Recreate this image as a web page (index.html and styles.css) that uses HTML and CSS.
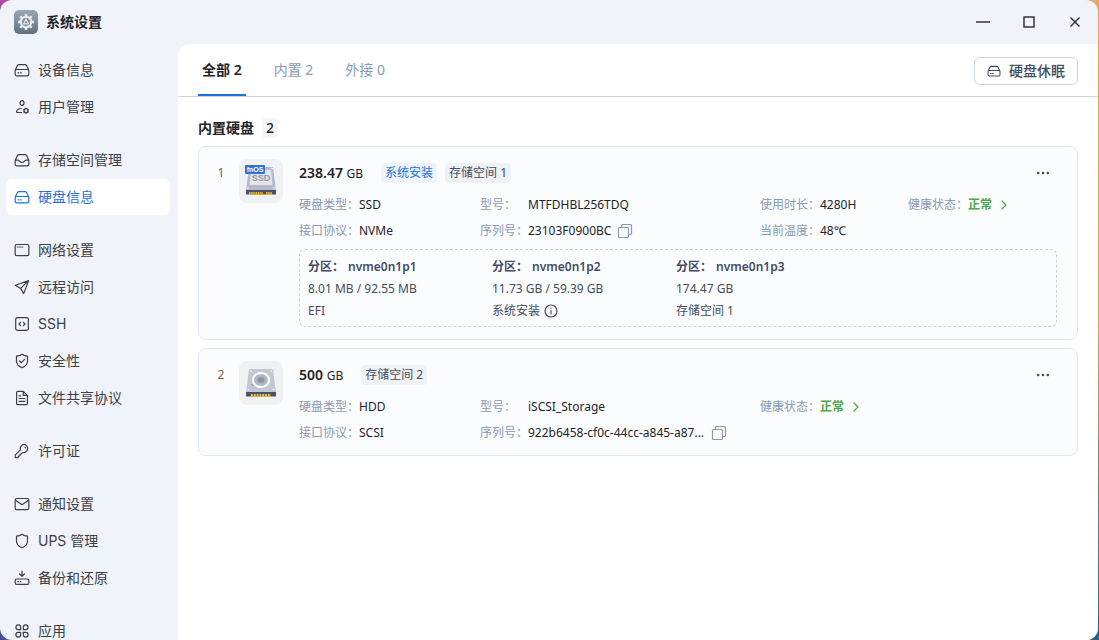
FILE: index.html
```html
<!DOCTYPE html>
<html lang="zh-CN">
<head>
<meta charset="utf-8">
<meta name="viewport" content="width=device-width, initial-scale=1">
<title>系统设置</title>
<link rel="stylesheet" href="styles.css">
</head>
<body>
<svg class="sprite" aria-hidden="true">
  <symbol id="disk" viewBox="0 0 16 16"><path d="M1.2 8.2v4a1.6 1.6 0 0 0 1.6 1.6h10.4a1.6 1.6 0 0 0 1.6-1.6v-4L12.6 3.6a1.7 1.7 0 0 0-1.5-.9H4.9a1.7 1.7 0 0 0-1.5.9L1.2 8.2a1.6 1.6 0 0 1 1.4-.7h10.8a1.6 1.6 0 0 1 1.4.7M4 10.8h.8M6.5 10.8h.8"/></symbol>
  <symbol id="user" viewBox="0 0 16 16"><ellipse cx="8" cy="4" rx="2" ry="2.300"/><path d="M7.200 9.500C4.800 9.600 3 10.900 2.600 12.500c-.1.700.3 1 1 1H7.500"/><circle cx="12" cy="11.700" r="2"/><path d="M12 9.200v.5M12 13.700v.5M9.900 10.400l.4.300M13.700 12.700l.4.300M9.900 13l.4-.3M13.700 10.700l.4-.3"/></symbol>
  <symbol id="storage" viewBox="0 0 16 16"><path d="M1.200 8.200v4a1.600 1.600 0 0 0 1.600 1.600h10.400a1.600 1.600 0 0 0 1.600-1.600v-4L12.600 3.600a1.700 1.700 0 0 0-1.500-.9H4.900a1.700 1.700 0 0 0-1.500.9L1.200 8.200h2.600c1.700 0 1.700 2.300 4.200 2.300s2.500-2.300 4.200-2.300h2.600"/></symbol>
  <symbol id="network" viewBox="0 0 16 16"><rect x="1.200" y="2.500" width="13.600" height="11.200" rx="1.500"/><path d="M3.300 5h.9M5.600 5h.9M7.900 5h.9"/></symbol>
  <symbol id="remote" viewBox="0 0 16 16"><path d="M14.600 1.600 1.400 6.300l5.200 3.100 3.100 5.200zM14.600 1.600l-8 7.800"/></symbol>
  <symbol id="ssh" viewBox="0 0 16 16"><rect x="1.700" y="1.700" width="12.600" height="12.600" rx="1.500"/><path d="M6.600 6.300 5 8l1.600 1.700M9.400 6.300 11 8 9.400 9.700"/></symbol>
  <symbol id="secure" viewBox="0 0 16 16"><path d="M8 1.300C6.500 2.500 4.700 3.100 2.500 3.200v5c0 3 2.300 5.200 5.500 6.500 3.200-1.300 5.500-3.500 5.500-6.500v-5C11.300 3.100 9.500 2.500 8 1.300zM5.600 8l1.800 1.700 3.200-3.300"/></symbol>
  <symbol id="shield" viewBox="0 0 16 16"><path d="M8 1.300C6.500 2.500 4.700 3.100 2.500 3.200v5c0 3 2.300 5.200 5.500 6.500 3.200-1.300 5.500-3.500 5.500-6.500v-5C11.300 3.100 9.500 2.500 8 1.300z"/></symbol>
  <symbol id="file" viewBox="0 0 16 16"><path d="M9.300 1.300H3.900a1.300 1.300 0 0 0-1.300 1.300v10.800a1.300 1.300 0 0 0 1.300 1.300h8.200a1.300 1.300 0 0 0 1.300-1.300V5.400zM9.300 1.300v4.100h4.100M5.200 5.900h1.400M5.200 8.500h5.600M5.200 11.300h5.600"/></symbol>
  <symbol id="key" viewBox="0 0 16 16"><path d="M10.400 1.400a4.200 4.200 0 0 0-4 5.500l-5 5a.9.900 0 0 0-.2.6v1.400c0 .5.300.8.800.8h1.500c.5 0 .8-.3.800-.8v-.8h1c.5 0 .7-.3.700-.8v-1h.8l1.600-1.700a4.200 4.200 0 1 0 2-8.200z"/><path d="M11.100 4.700h.3"/></symbol>
  <symbol id="mail" viewBox="0 0 16 16"><rect x="1.200" y="2.500" width="13.600" height="11.200" rx="1.500"/><path d="m1.600 4.200 5.200 3.700c.7.500 1.700.5 2.400 0l5.200-3.700"/></symbol>
  <symbol id="backup" viewBox="0 0 16 16"><path d="M8 1v5M5.600 4 8 6.300 10.400 4"/><rect x="1.200" y="9" width="13.600" height="5.400" rx="1.500"/><path d="M3.800 11.700h.6M6.200 11.700h.6"/></symbol>
  <symbol id="apps" viewBox="0 0 16 16"><path d="M6.700 6.700H4.200a2.400 2.400 0 1 1 2.500-2.500zM9.300 6.700h2.500a2.400 2.400 0 1 0-2.500-2.500zM6.700 9.300H4.200a2.400 2.400 0 1 0 2.500 2.500zM9.300 9.300h2.500a2.400 2.400 0 1 1-2.500 2.500z"/></symbol>
  <symbol id="copy" viewBox="0 0 16 16"><rect x="1.500" y="4.500" width="10" height="10" rx="1"/><path d="M4.500 4.300V2.500a1 1 0 0 1 1-1h8a1 1 0 0 1 1 1v8a1 1 0 0 1-1 1h-1.800"/></symbol>
  <symbol id="chevron" viewBox="0 0 12 12"><path d="m4 2 4 4-4 4"/></symbol>
  <symbol id="info" viewBox="0 0 16 16"><circle cx="8" cy="8" r="6"/><path d="M8 7.500v3.200M8 5.200v.1"/></symbol>
  <symbol id="dots" viewBox="0 0 16 16"><circle cx="3.200" cy="8" r="1.300"/><circle cx="8" cy="8" r="1.300"/><circle cx="12.800" cy="8" r="1.300"/></symbol>
</svg>
<div class="window">
  <header class="titlebar">
    <svg class="app-icon" viewBox="0 0 24 24" aria-hidden="true">
      <defs><linearGradient id="ig" x1="0" y1="0" x2="0" y2="1"><stop offset="0" stop-color="#9aa7b6"/><stop offset="1" stop-color="#626f80"/></linearGradient></defs>
      <rect width="24" height="24" rx="5" fill="url(#ig)"/>
      <g stroke="#e6e9ed" stroke-width="2.600"><path d="M12 4v16M4 12h16M6.300 6.300l11.400 11.400M17.700 6.300 6.300 17.700"/></g>
      <circle cx="12" cy="12" r="5.200" fill="#7f8c9c" stroke="#e6e9ed" stroke-width="2.200"/>
      <path d="m12 9.200 2.500 4.600h-5z" fill="none" stroke="#e6e9ed" stroke-width="1.200" stroke-linejoin="round"/>
    </svg>
    <h1 class="app-title">系统设置</h1>
    <div class="controls">
      <button class="control" type="button" aria-label="最小化"><svg viewBox="0 0 16 16"><path d="M1 8h14"/></svg></button>
      <button class="control" type="button" aria-label="最大化"><svg viewBox="0 0 16 16"><rect x="3" y="3" width="10" height="10"/></svg></button>
      <button class="control" type="button" aria-label="关闭"><svg viewBox="0 0 16 16"><path d="m3.500 3.500 9 9M12.500 3.500l-9 9"/></svg></button>
    </div>
  </header>
  <div class="body">
    <nav class="sidebar">
      <div class="group">
        <a class="item" href="#device"><svg class="icon"><use href="#disk"/></svg>设备信息</a>
        <a class="item" href="#users"><svg class="icon"><use href="#user"/></svg>用户管理</a>
      </div>
      <div class="group">
        <a class="item" href="#space"><svg class="icon"><use href="#storage"/></svg>存储空间管理</a>
        <a class="item active" href="#disks" aria-current="page"><svg class="icon"><use href="#disk"/></svg>硬盘信息</a>
      </div>
      <div class="group">
        <a class="item" href="#net"><svg class="icon"><use href="#network"/></svg>网络设置</a>
        <a class="item" href="#access"><svg class="icon"><use href="#remote"/></svg>远程访问</a>
        <a class="item" href="#terminal"><svg class="icon"><use href="#ssh"/></svg>SSH</a>
        <a class="item" href="#security"><svg class="icon"><use href="#secure"/></svg>安全性</a>
        <a class="item" href="#share"><svg class="icon"><use href="#file"/></svg>文件共享协议</a>
      </div>
      <div class="group">
        <a class="item" href="#license"><svg class="icon"><use href="#key"/></svg>许可证</a>
      </div>
      <div class="group">
        <a class="item" href="#notify"><svg class="icon"><use href="#mail"/></svg>通知设置</a>
        <a class="item" href="#ups"><svg class="icon"><use href="#shield"/></svg>UPS 管理</a>
        <a class="item" href="#restore"><svg class="icon"><use href="#backup"/></svg>备份和还原</a>
      </div>
      <div class="group">
        <a class="item" href="#application"><svg class="icon"><use href="#apps"/></svg>应用</a>
      </div>
    </nav>
    <main class="main">
      <div class="toolbar">
        <div class="tabs" role="tablist">
          <button class="tab selected" type="button" role="tab" aria-selected="true">全部 2</button>
          <button class="tab" type="button" role="tab" aria-selected="false">内置 2</button>
          <button class="tab" type="button" role="tab" aria-selected="false">外接 0</button>
        </div>
        <button class="sleep" type="button"><svg class="icon-small"><use href="#disk"/></svg>硬盘休眠</button>
      </div>
      <section class="content">
        <h2 class="section-title">内置硬盘 <span class="count">2</span></h2>

        <article class="card">
          <span class="index">1</span>
          <div class="thumb">
            <svg viewBox="0 0 44 44" role="img" aria-label="fnOS SSD">
              <path d="M10 8h24l3 24H7z" fill="#b6bac8"/><path d="M12 11h20l1.500 15h-23z" fill="#e3e5ec"/>
              <path d="M7 31h30v4.500H7z" fill="#4b5068"/><path d="M10 34.500h14M27 34.500h6" stroke="#e5b93c" stroke-width="3" stroke-dasharray="1.500 .7"/>
              <circle cx="33" cy="9.500" r=".8" fill="#fff"/><circle cx="35" cy="29" r=".8" fill="#fff"/><circle cx="9" cy="29" r=".8" fill="#fff"/>
              <text class="ssd-label" x="22" y="22" text-anchor="middle">SSD</text>
              <rect x="6" y="6" width="20" height="9" rx="1" fill="#2f72dc"/><text class="os-label" x="16" y="13" text-anchor="middle">fnOS</text>
            </svg>
          </div>
          <div class="info">
            <div class="head">
              <strong class="size">238.47 <span class="unit">GB</span></strong>
              <span class="tag blue">系统安装</span><span class="tag">存储空间 1</span>
              <button class="more" type="button" aria-label="更多"><svg class="dots"><use href="#dots"/></svg></button>
            </div>
            <div class="fields">
              <div class="field"><span class="label">硬盘类型：</span>SSD</div>
              <div class="field"><span class="label short">型号：</span>MTFDHBL256TDQ</div>
              <div class="field"><span class="label">使用时长：</span>4280H</div>
              <div class="field"><span class="label">健康状态：</span><a class="health" href="#health1">正常<svg class="chevron"><use href="#chevron"/></svg></a></div>
              <div class="field"><span class="label">接口协议：</span>NVMe</div>
              <div class="field"><span class="label short">序列号：</span>23103F0900BC<button class="copy" type="button" aria-label="复制"><svg class="icon"><use href="#copy"/></svg></button></div>
              <div class="field"><span class="label">当前温度：</span>48℃</div>
            </div>
            <div class="partitions">
              <div class="partition"><strong class="part-name"><span>分区：</span>nvme0n1p1</strong><span>8.01 MB / 92.55 MB</span><span>EFI</span></div>
              <div class="partition"><strong class="part-name"><span>分区：</span>nvme0n1p2</strong><span>11.73 GB / 59.39 GB</span><span class="with-icon">系统安装<svg class="icon"><use href="#info"/></svg></span></div>
              <div class="partition"><strong class="part-name"><span>分区：</span>nvme0n1p3</strong><span>174.47 GB</span><span>存储空间 1</span></div>
            </div>
          </div>
        </article>

        <article class="card">
          <span class="index warn">2</span>
          <div class="thumb">
            <svg viewBox="0 0 44 44" role="img" aria-label="HDD">
              <path d="M10 8h24l3 24H7z" fill="#c3c7d2"/><path d="M7 31h30v4.500H7z" fill="#4b5068"/>
              <path d="M12 34.500h20" stroke="#e5b93c" stroke-width="3" stroke-dasharray="2 .8"/>
              <ellipse cx="22" cy="19" rx="8" ry="7" fill="#b2b6c3" stroke="#fff" stroke-width="2"/><ellipse cx="22" cy="19" rx="3.500" ry="3" fill="#8e94a5"/>
              <path d="m13 23.500 1 1" stroke="#3f4356" stroke-width="1"/>
              <circle cx="12" cy="10" r=".8" fill="#fff"/><circle cx="32" cy="10" r=".8" fill="#fff"/><circle cx="34.500" cy="28.500" r=".8" fill="#fff"/><circle cx="9.500" cy="28.500" r=".8" fill="#fff"/>
            </svg>
          </div>
          <div class="info">
            <div class="head">
              <strong class="size">500 <span class="unit">GB</span></strong>
              <span class="tag">存储空间 2</span>
              <button class="more" type="button" aria-label="更多"><svg class="dots"><use href="#dots"/></svg></button>
            </div>
            <div class="fields">
              <div class="field"><span class="label">硬盘类型：</span>HDD</div>
              <div class="field"><span class="label short">型号：</span>iSCSI_Storage</div>
              <div class="field wide"><span class="label">健康状态：</span><a class="health" href="#health2">正常<svg class="chevron"><use href="#chevron"/></svg></a></div>
              <div class="field"><span class="label">接口协议：</span>SCSI</div>
              <div class="field"><span class="label short">序列号：</span><span class="serial">922b6458-cf0c-44cc-a845-a87...</span><button class="copy" type="button" aria-label="复制"><svg class="icon"><use href="#copy"/></svg></button></div>
            </div>
          </div>
        </article>
      </section>
    </main>
  </div>
</div>
</body>
</html>
```

FILE: styles.css
```css
* { box-sizing: border-box; }

body {
  margin: 0;
  height: 100vh;
  padding-right: 1px;
  overflow: hidden;
  background:
    linear-gradient(#e5a868, #c9a66b 50%, #2f5f80) right / 50% 100% no-repeat,
    linear-gradient(#b04aa5, #4b4b9c);
  color: #1f2329;
  font: 12px/20px "Noto Sans", "Noto Sans CJK SC", sans-serif;
}

button { margin: 0; padding: 0; border: 0; background: none; color: inherit; font: inherit; cursor: pointer; }
a { color: inherit; text-decoration: none; }
svg { display: block; flex: none; }

.sprite { position: absolute; width: 0; height: 0; }

.window {
  display: flex;
  flex-direction: column;
  height: 100%;
  overflow: hidden;
  border-radius: 12px;
  background: #f0f3f9;
}

.titlebar { display: flex; align-items: center; flex: none; height: 44px; padding: 0 12px 0 14px; gap: 8px; }
.app-icon { width: 24px; height: 24px; }
.app-title { margin: 0; font-size: 14px; font-weight: 700; }
.controls { display: flex; gap: 24px; margin-left: auto; }
.control { width: 22px; height: 22px; display: grid; place-items: center; }
.control svg { width: 16px; height: 16px; fill: none; stroke: #25282d; stroke-width: 1.4; }

.body { display: flex; flex: 1; min-height: 0; }

.sidebar {
  display: flex;
  flex-direction: column;
  flex: none;
  gap: 17px;
  width: 178px;
  padding: 8px 8px 0 6px;
  overflow: hidden;
}
.group { display: flex; flex-direction: column; gap: 1px; }
.item {
  display: flex;
  align-items: center;
  gap: 8px;
  height: 36px;
  padding: 0 8px;
  border-radius: 6px;
  color: #3b3f47;
  font-family: Inter, "Noto Sans CJK SC", sans-serif;
  font-size: 14px;
}
.item.active { background: #fff; color: #1f6fe0; }
.icon { width: 16px; height: 16px; }
.icon, .icon-small, .chevron { fill: none; stroke: currentColor; stroke-width: 1.2; stroke-linecap: round; stroke-linejoin: round; }
.icon-small { width: 14px; height: 14px; }

.main { flex: 1; min-width: 0; border-top-left-radius: 12px; background: #fff; overflow: hidden; }

.toolbar {
  display: flex;
  align-items: center;
  justify-content: space-between;
  height: 53px;
  padding: 2px 20px 0;
  border-bottom: 1px solid #cad5e2;
}
.tabs { display: flex; gap: 24px; align-self: stretch; }
.tab { padding: 0 4px; border-bottom: 2px solid transparent; color: #8a9ab3; font-size: 14px; }
.tab.selected { border-color: #1f6fe0; color: #1f2329; font-weight: 600; }

.sleep {
  display: flex;
  align-items: center;
  gap: 8px;
  height: 28px;
  padding: 0 12px;
  border: 1px solid #cad5e2;
  border-radius: 6px;
  color: #434c5e;
  font-size: 14px;
  font-weight: 500;
}

.content { display: flex; flex-direction: column; gap: 8px; padding: 21px 20px; }
.section-title { display: flex; align-items: center; gap: 8px; margin: 0; font-size: 14px; font-weight: 600; }
.count { padding: 0 4px; border-radius: 4px; background: #f4f5f6; font-weight: 500; }

.card {
  display: flex;
  padding: 12px 20px 12px 12px;
  border: 1px solid #e1e7ef;
  border-radius: 8px;
  background: #fbfcfe;
}
.index { width: 20px; margin-right: 8px; line-height: 28px; text-align: center; color: #596477; }
.index.warn { color: #805a4c; }
.thumb { width: 44px; height: 44px; margin-right: 16px; border-radius: 8px; background: #f0f1f5; }
.ssd-label { font: 700 9px "Liberation Sans", sans-serif; fill: #9297a7; }
.os-label { font: 700 7px "Liberation Sans", sans-serif; fill: #fff; }

.info { flex: 1; min-width: 0; }
.head { display: flex; align-items: center; gap: 8px; height: 28px; }
.size { margin-right: 10px; font-size: 14px; font-weight: 600; }
.unit { font-size: 12px; font-weight: 400; }
.tag { padding: 0 4px; border-radius: 4px; background: #f0f1f5; color: #434c5e; }
.tag.blue { background: #edf4fd; color: #1f6fe0; }
.more { margin-left: auto; padding: 0 6px; color: #434c5e; }
.dots { width: 16px; height: 16px; fill: currentColor; }

.fields { display: grid; grid-template-columns: 181fr 280fr 148fr 149fr; row-gap: 6px; padding-top: 8px; }
.field { display: flex; align-items: center; min-width: 0; height: 20px; white-space: nowrap; }
.field.wide { grid-column: span 2; }
.label { flex: none; width: 60px; color: #8a9ab3; }
.label.short { width: 48px; }
.serial { width: 177px; overflow: hidden; }
.copy { margin-left: 6px; color: #8a9ab3; }
.health { display: flex; align-items: center; gap: 6px; color: #4da74d; font-weight: 600; }
.chevron { width: 12px; height: 12px; }

.partitions {
  display: grid;
  grid-template-columns: repeat(4, 1fr);
  margin-top: 8px;
  padding: 7px 12px 5px 8px;
  border: 1px dashed #cbd3df;
  border-radius: 6px;
  color: #434c5e;
}
.partition { display: flex; flex-direction: column; gap: 2px; }
.part-name { display: flex; gap: 4px; font-weight: 600; }
.with-icon { display: flex; align-items: center; gap: 3px; }
```
